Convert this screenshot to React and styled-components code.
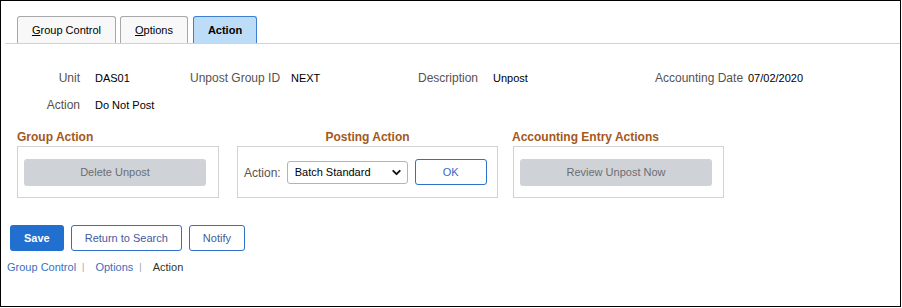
import styled, { createGlobalStyle } from 'styled-components';
import { ChevronDown } from 'lucide-react';

const GlobalStyle = createGlobalStyle`
    body {
        margin: 0;
        background: #fff;
        font-family: "Liberation Sans", Arial, sans-serif;
    }
`

const fields = [
    [
        { label: 'Unit', value: 'DAS01' },
        { label: 'Unpost Group ID', value: 'NEXT' },
        { label: 'Description', value: 'Unpost' },
        { label: 'Accounting Date', value: '07/02/2020' },
    ],
    [{ label: 'Action', value: 'Do Not Post' }],
]

const App = () => {
    return (
        <>
            <GlobalStyle />
            <Frame>
                <TabBar>
                    <Tab $width={99}><u>G</u>roup Control</Tab>
                    <Tab $width={68}><u>O</u>ptions</Tab>
                    <Tab $width={64} $active>Action</Tab>
                </TabBar>

                <FieldGrid>
                    {fields.map((row) =>
                        row.map((f, i) => [
                            <Label key={f.label} $right={i === 0}>{f.label}</Label>,
                            <Value key={f.label + '-v'}>{f.value}</Value>,
                        ])
                    )}
                </FieldGrid>

                <Sections>
                    <Section $width={202}>
                        <Heading>Group Action</Heading>
                        <Box>
                            <DisabledButton $width={182}>Delete Unpost</DisabledButton>
                        </Box>
                    </Section>
                    <Section $width={261} $ml={18}>
                        <Heading $center>Posting Action</Heading>
                        <Box>
                            <InlineLabel>Action:</InlineLabel>
                            <SelectWrap>
                                <Select defaultValue='batch'>
                                    <option value='batch'>Batch Standard</option>
                                </Select>
                                <Chevron size={13} strokeWidth={3.5} />
                            </SelectWrap>
                            <OutlineButton $width={72} $height={26} $color='#2f6cc6' style={{ marginLeft: 7 }}>OK</OutlineButton>
                        </Box>
                    </Section>
                    <Section $width={211} $ml={15}>
                        <Heading style={{ marginLeft: -1 }}>Accounting Entry Actions</Heading>
                        <Box>
                            <DisabledButton $width={192}>Review Unpost Now</DisabledButton>
                        </Box>
                    </Section>
                </Sections>

                <ButtonRow>
                    <PrimaryButton>Save</PrimaryButton>
                    <OutlineButton>Return to Search</OutlineButton>
                    <OutlineButton>Notify</OutlineButton>
                </ButtonRow>

                <LinkRow>
                    <PageLink>Group Control</PageLink>
                    <Sep>|</Sep>
                    <PageLink>Options</PageLink>
                    <Sep>|</Sep>
                    <PageLink $current>Action</PageLink>
                </LinkRow>
            </Frame>
        </>
    )
}

export default App


//Styled components
const Frame = styled.div`
    width: 901px;
    height: 307px;
    box-sizing: border-box;
    border: 1px solid #000;
    display: flex;
    flex-direction: column;
    color: #000;
`

const TabBar = styled.div`
    display: flex;
    align-items: flex-end;
    gap: 4px;
    margin: 15px 0 0 4px;
    padding-left: 12px;
    border-bottom: 1px solid #d2d2d2;
`

const Tab = styled.div`
    width: ${p => p.$width}px;
    height: 27px;
    box-sizing: border-box;
    display: flex;
    align-items: center;
    justify-content: center;
    font-size: 11px;
    font-weight: ${p => (p.$active ? 700 : 400)};
    color: #000;
    background: ${p => (p.$active ? '#bddcf8' : '#f8f8f8')};
    border: 1px solid ${p => (p.$active ? '#3d7fd3' : '#a8a8a8')};
    border-bottom: none;
    border-radius: 3px 3px 0 0;
    margin-left: ${p => (p.$active ? '1px' : '0')};

    u {
        text-decoration: underline;
        text-underline-offset: 1px;
    }
`

const FieldGrid = styled.div`
    display: grid;
    grid-template-columns: 94px 95px 101px 127px 75px 162px 93px 1fr;
    grid-auto-rows: 27px;
    align-items: center;
    margin-top: 20px;
`

const Label = styled.div`
    font-size: 12px;
    color: #57524d;
    text-align: ${p => (p.$right ? 'right' : 'left')};
    padding-right: ${p => (p.$right ? '15px' : '0')};
`

const Value = styled.div`
    font-size: 11px;
    color: #000;
`

const Sections = styled.div`
    display: flex;
    margin-top: 12px;
    padding-left: 16px;
`

const Section = styled.div`
    width: ${p => p.$width}px;
    margin-left: ${p => p.$ml || 0}px;
    display: flex;
    flex-direction: column;
`

const Heading = styled.div`
    font-size: 12px;
    font-weight: 700;
    line-height: 14px;
    color: #a3581c;
    text-align: ${p => (p.$center ? 'center' : 'left')};
    margin-bottom: 2px;
`

const Box = styled.div`
    height: 52px;
    box-sizing: border-box;
    border: 1px solid #d3d3d3;
    display: flex;
    align-items: center;
    padding: 0 6px;
`

const DisabledButton = styled.div`
    width: ${p => p.$width}px;
    height: 27px;
    border-radius: 3px;
    background: #cfd3d8;
    color: #6a6e73;
    font-size: 11px;
    display: flex;
    align-items: center;
    justify-content: center;
`

const InlineLabel = styled.span`
    font-size: 12px;
    color: #57524d;
    margin: 2px 6px 0 0;
`

const SelectWrap = styled.div`
    position: relative;
    width: 121px;
    height: 23px;
`

const Select = styled.select`
    appearance: none;
    width: 100%;
    height: 100%;
    box-sizing: border-box;
    border: 1px solid #b4b4b4;
    border-radius: 3px;
    background: #fff;
    font-family: "Liberation Sans", Arial, sans-serif;
    font-size: 11px;
    color: #000;
    padding: 0 0 0 7px;
    margin: 0;
`

const Chevron = styled(ChevronDown)`
    position: absolute;
    right: 5px;
    top: 5px;
    color: #111;
    pointer-events: none;
`

const OutlineButton = styled.div`
    height: ${p => p.$height || 26}px;
    width: ${p => (p.$width ? p.$width + 'px' : 'auto')};
    box-sizing: border-box;
    padding: 0 13px;
    border: 1px solid #2f70c9;
    border-radius: 3px;
    background: #fff;
    color: ${p => p.$color || '#3f5b9f'};
    font-size: 11px;
    display: flex;
    align-items: center;
    justify-content: center;
`

const PrimaryButton = styled.div`
    height: 26px;
    box-sizing: border-box;
    padding: 0 14px;
    border-radius: 3px;
    background: #216fcf;
    color: #fff;
    font-size: 11px;
    font-weight: 700;
    display: flex;
    align-items: center;
`

const ButtonRow = styled.div`
    display: flex;
    gap: 7px;
    margin-top: 27px;
    padding-left: 9px;
`

const LinkRow = styled.div`
    display: flex;
    align-items: center;
    margin-top: 9px;
    padding-left: 6px;
    font-size: 11px;
    line-height: 14px;
`

const PageLink = styled.span`
    color: ${p => (p.$current ? '#333' : '#3a6fc0')};
`

const Sep = styled.span`
    color: #a0a0a0;
    font-size: 9px;
    margin: 0 11px 0 6px;
`
